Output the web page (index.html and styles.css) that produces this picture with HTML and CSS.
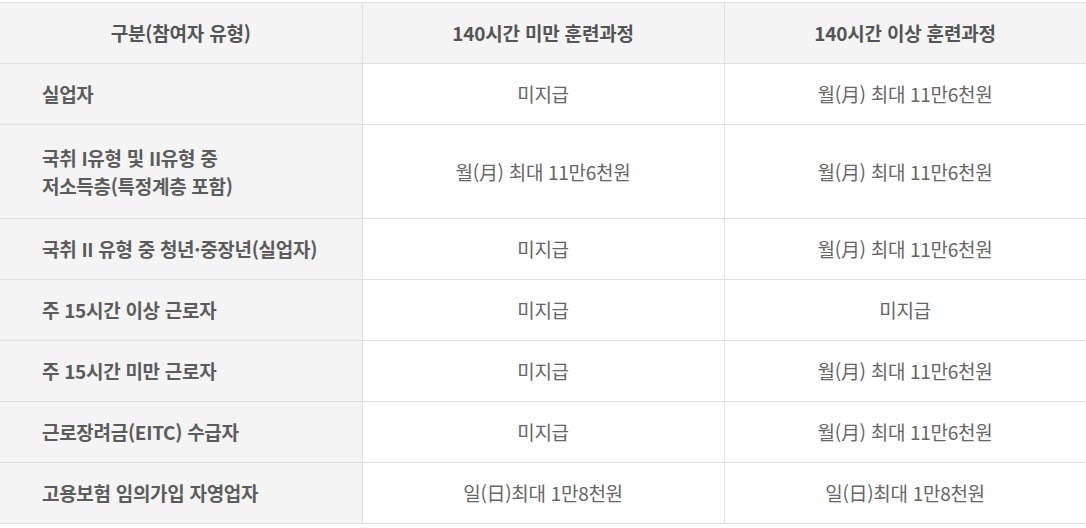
FILE: index.html
```html
<!DOCTYPE html>
<html lang="ko">
<head>
<meta charset="utf-8">
<title>훈련장려금 지급 기준</title>
<link rel="stylesheet" href="styles.css">
</head>
<body>
<table class="support-table">
  <colgroup>
    <col class="col-type">
    <col class="col-short">
    <col class="col-long">
  </colgroup>
  <thead>
    <tr>
      <th>구분(참여자 유형)</th>
      <th>140시간 미만 훈련과정</th>
      <th>140시간 이상 훈련과정</th>
    </tr>
  </thead>
  <tbody>
    <tr>
      <th class="row-head">실업자</th>
      <td>미지급</td>
      <td>월(月) 최대 11만6천원</td>
    </tr>
    <tr class="tall">
      <th class="row-head">국취 I유형 및 II유형 중<br>저소득층(특정계층 포함)</th>
      <td>월(月) 최대 11만6천원</td>
      <td>월(月) 최대 11만6천원</td>
    </tr>
    <tr>
      <th class="row-head">국취 II 유형 중 청년·중장년(실업자)</th>
      <td>미지급</td>
      <td>월(月) 최대 11만6천원</td>
    </tr>
    <tr>
      <th class="row-head">주 15시간 이상 근로자</th>
      <td>미지급</td>
      <td>미지급</td>
    </tr>
    <tr>
      <th class="row-head">주 15시간 미만 근로자</th>
      <td>미지급</td>
      <td>월(月) 최대 11만6천원</td>
    </tr>
    <tr>
      <th class="row-head">근로장려금(EITC) 수급자</th>
      <td>미지급</td>
      <td>월(月) 최대 11만6천원</td>
    </tr>
    <tr>
      <th class="row-head">고용보험 임의가입 자영업자</th>
      <td>일(日)최대 1만8천원</td>
      <td>일(日)최대 1만8천원</td>
    </tr>
  </tbody>
</table>
</body>
</html>
```

FILE: styles.css
```css
html, body {
  margin: 0;
  padding: 0;
  background: #ffffff;
}

body {
  padding-top: 2px;
  font-family: "Noto Sans CJK KR", "Noto Sans", sans-serif;
  font-size: 19px;
  color: #666666;
}

.support-table {
  width: 1086px;
  border-collapse: collapse;
  table-layout: fixed;
}

.col-type,
.col-short,
.col-long {
  width: 362px;
}

.support-table th,
.support-table td {
  border: 1px solid #e0e0e0;
  height: 60px;
  padding: 0;
  line-height: 28px;
  vertical-align: middle;
}

.support-table tr > :first-child {
  border-left: none;
}

.support-table thead th {
  background: #f4f4f4;
  color: #555555;
  font-weight: 700;
  text-align: center;
  letter-spacing: -0.2px;
}

.support-table .row-head {
  background: #f4f4f4;
  color: #5c5c5c;
  font-weight: 700;
  text-align: left;
  padding-left: 42px;
  letter-spacing: -0.3px;
}

.support-table td {
  text-align: center;
  font-weight: 400;
  color: #666666;
  letter-spacing: -0.3px;
}

.support-table .tall th,
.support-table .tall td {
  height: 93px;
}
```
